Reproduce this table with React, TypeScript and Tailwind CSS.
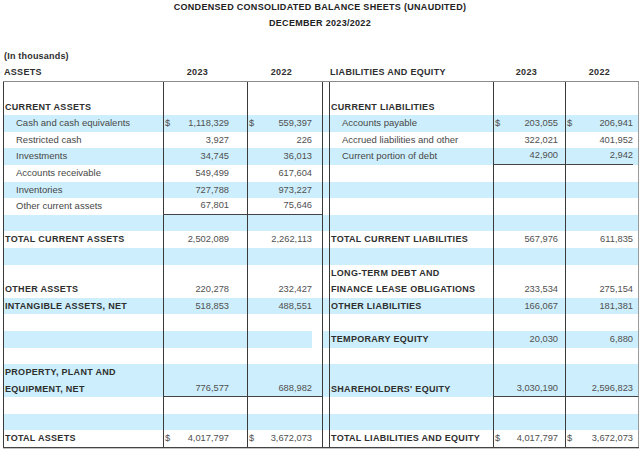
import React from "react";

type Val = [string, string] | undefined;

type RowData = {
  h: 1 | 2;
  blue: boolean;
  l?: string[];
  lb?: boolean;
  li?: boolean;
  a?: Val;
  b?: Val;
  r?: string[];
  rb?: boolean;
  ri?: boolean;
  c?: Val;
  d?: Val;
  lineL?: boolean;
  lineR?: "inner" | "full";
  quirk?: boolean;
};

const rows: RowData[] = [
  { h: 2, blue: false, l: ["", "CURRENT ASSETS"], lb: true, r: ["", "CURRENT LIABILITIES"], rb: true },
  { h: 1, blue: true, l: ["Cash and cash equivalents"], li: true, a: ["$", "1,118,329"], b: ["$", "559,397"], r: ["Accounts payable"], ri: true, c: ["$", "203,055"], d: ["$", "206,941"] },
  { h: 1, blue: false, l: ["Restricted cash"], li: true, a: ["", "3,927"], b: ["", "226"], r: ["Accrued liabilities and other"], ri: true, c: ["", "322,021"], d: ["", "401,952"] },
  { h: 1, blue: true, l: ["Investments"], li: true, a: ["", "34,745"], b: ["", "36,013"], r: ["Current portion of debt"], ri: true, c: ["", "42,900"], d: ["", "2,942"], lineR: "inner" },
  { h: 1, blue: false, l: ["Accounts receivable"], li: true, a: ["", "549,499"], b: ["", "617,604"] },
  { h: 1, blue: true, l: ["Inventories"], li: true, a: ["", "727,788"], b: ["", "973,227"] },
  { h: 1, blue: false, l: ["Other current assets"], li: true, a: ["", "67,801"], b: ["", "75,646"], lineL: true },
  { h: 1, blue: true },
  { h: 1, blue: false, l: ["TOTAL CURRENT ASSETS"], lb: true, a: ["", "2,502,089"], b: ["", "2,262,113"], r: ["TOTAL CURRENT LIABILITIES"], rb: true, c: ["", "567,976"], d: ["", "611,835"] },
  { h: 1, blue: true },
  { h: 2, blue: false, l: ["", "OTHER ASSETS"], lb: true, a: ["", "220,278"], b: ["", "232,427"], r: ["LONG-TERM DEBT AND", "FINANCE LEASE OBLIGATIONS"], rb: true, c: ["", "233,534"], d: ["", "275,154"] },
  { h: 1, blue: true, l: ["INTANGIBLE ASSETS, NET"], lb: true, a: ["", "518,853"], b: ["", "488,551"], r: ["OTHER LIABILITIES"], rb: true, c: ["", "166,067"], d: ["", "181,381"] },
  { h: 1, blue: false },
  { h: 1, blue: true, quirk: true, r: ["TEMPORARY EQUITY"], rb: true, c: ["", "20,030"], d: ["", "6,880"] },
  { h: 1, blue: false },
  { h: 2, blue: true, l: ["PROPERTY, PLANT AND", "EQUIPMENT, NET"], lb: true, a: ["", "776,577"], b: ["", "688,982"], r: ["", "SHAREHOLDERS' EQUITY"], rb: true, c: ["", "3,030,190"], d: ["", "2,596,823"], lineL: true, lineR: "full" },
  { h: 1, blue: false },
  { h: 1, blue: true },
  { h: 1, blue: false, l: ["TOTAL ASSETS"], lb: true, a: ["$", "4,017,797"], b: ["$", "3,672,073"], r: ["TOTAL LIABILITIES AND EQUITY"], rb: true, c: ["$", "4,017,797"], d: ["$", "3,672,073"] },
];

function Label({ lines, bold, indent, cls }: { lines?: string[]; bold?: boolean; indent?: boolean; cls: string }) {
  return (
    <div className={`${cls} flex flex-col justify-end border-l border-[#3a3a3a] overflow-hidden`}>
      {(lines ?? []).map((t, i) => (
        <div
          key={i}
          className={`h-[16.6px] leading-[16.6px] whitespace-nowrap ${
            bold ? "font-bold tracking-[0.3px] text-[#2e2e2e]" : "text-[9.5px] text-[#474747]"
          } ${indent ? "pl-[12px]" : "pl-[1px]"}`}
        >
          {t}
        </div>
      ))}
    </div>
  );
}

function Value({ v, cls }: { v: Val; cls: string }) {
  return (
    <div className={`h-[16.6px] leading-[16.6px] flex justify-between text-[9.3px] text-[#505050] whitespace-nowrap ${cls}`}>
      <span>{v ? v[0] : ""}</span>
      <span>{v ? v[1] : ""}</span>
    </div>
  );
}

function Row({ r }: { r: RowData }) {
  const h = r.h === 2 ? "h-[33.2px]" : "h-[16.6px]";
  const bg = r.blue ? "bg-[#cdeefc]" : "bg-white";
  return (
    <div className={`flex ${h} ${bg}`}>
      <Label lines={r.l} bold={r.lb} indent={r.li} cls="w-[160px]" />
      <div className={`w-[84px] flex flex-col justify-end border-l border-[#3a3a3a] ${r.lineL ? "border-b border-b-[#444]" : ""}`}>
        <Value v={r.a} cls="pl-[1px] pr-[18px]" />
      </div>
      <div
        className={`w-[75px] flex flex-col justify-end border-l border-[#3a3a3a] ${r.lineL ? "border-b border-b-[#444]" : ""} ${
          r.quirk ? "bg-white" : ""
        }`}
      >
        {r.quirk ? (
          <div className="h-full mr-[10px] bg-[#cdeefc]" />
        ) : (
          <Value v={r.b} cls="pl-[1px] pr-[10px]" />
        )}
      </div>
      <div className="w-[7px] border-l border-[#3a3a3a]" />
      <Label lines={r.r} bold={r.rb} indent={r.ri} cls="w-[164px]" />
      <div
        className={`w-[72px] flex flex-col justify-end border-l border-[#3a3a3a] ${
          r.lineR ? "border-b border-b-[#444]" : ""
        }`}
      >
        <Value v={r.c} cls="pl-[1px] pr-[7px]" />
      </div>
      <div
        className={`w-[74px] flex flex-col justify-end border-l border-r border-l-[#3a3a3a] border-r-[#9a9a9a] ${
          r.lineR === "full" ? "border-b border-b-[#444]" : ""
        }`}
      >
        <div className={`mr-[5px] ${r.lineR === "inner" ? "border-b border-[#444]" : ""}`}>
          <Value v={r.d} cls="pl-[1px]" />
        </div>
      </div>
    </div>
  );
}

export default function App() {
  return (
    <div className="w-[640px] h-[453px] bg-white overflow-hidden font-['Liberation_Sans',Arial,sans-serif] text-[9px]">
      {/* Title */}
      <div className="h-[14px] leading-[14px] text-center font-bold tracking-[0.3px] text-[#222]">
        CONDENSED CONSOLIDATED BALANCE SHEETS (UNAUDITED)
      </div>
      <div className="mt-[2px] h-[14px] leading-[14px] text-center font-bold tracking-[0.3px] text-[#222]">
        DECEMBER 2023/2022
      </div>

      <div className="mt-[19px] h-[14px] leading-[14px] pl-[4px] font-bold tracking-[0.2px] text-[#2e2e2e]">
        (In thousands)
      </div>

      {/* Column headings */}
      <div className="mt-[1px] h-[16px] leading-[16px] ml-[3px] flex font-bold tracking-[0.3px] text-[#2e2e2e]">
        <div className="w-[160px] pl-[1px]">ASSETS</div>
        <div className="w-[84px] text-right pr-[39px]">2023</div>
        <div className="w-[75px] text-right pr-[30px]">2022</div>
        <div className="w-[7px]" />
        <div className="w-[164px] pl-[1px]">LIABILITIES AND EQUITY</div>
        <div className="w-[72px] text-right pr-[28px]">2023</div>
        <div className="w-[74px] text-right pr-[29px]">2022</div>
      </div>

      {/* Table */}
      <div className="mt-[1px] ml-[3px] w-[636px] border-t border-b border-t-[#8a8a8a] border-b-[#444]">
        {rows.map((r, i) => (
          <Row key={i} r={r} />
        ))}
      </div>
      <div className="ml-[3px] w-[636px] h-[1px] bg-[#c4c4c4]" />
    </div>
  );
}
